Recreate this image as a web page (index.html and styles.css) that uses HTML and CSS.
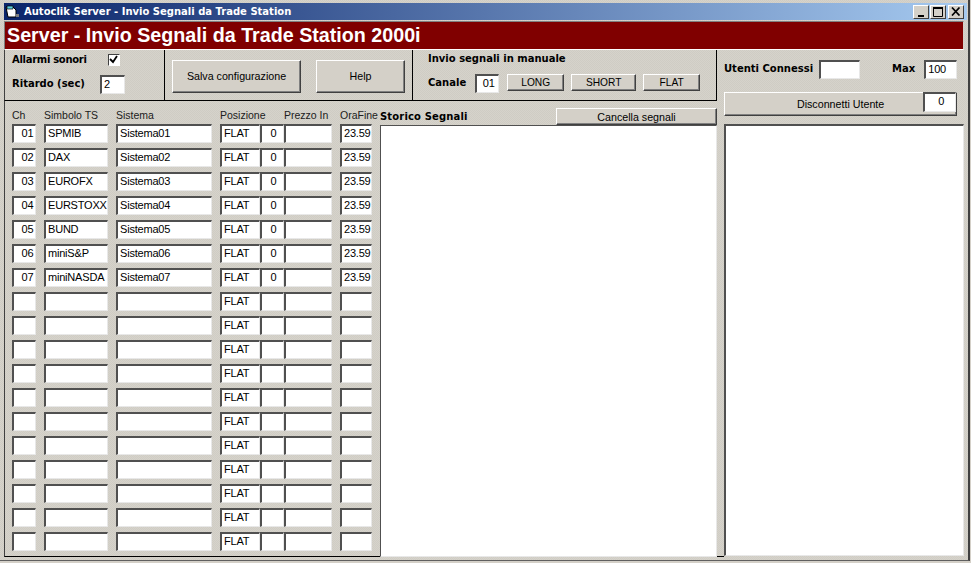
FILE: index.html
```html
<!DOCTYPE html>
<html lang="it">
<head>
<meta charset="UTF-8">
<title>Autoclik Server - Invio Segnali da Trade Station</title>
<link rel="stylesheet" href="styles.css">
</head>
<body>
<div class="window">

  <div class="titlebar">
    <svg class="app-icon" width="16" height="14" viewBox="0 0 16 14">
      <path d="M2 2h7l3 3v7H4z" fill="#fff" stroke="#000"/>
      <path d="M3 1h6v3H3z" fill="#5fd0e0" stroke="#000" stroke-width="0.7"/>
      <path d="M12 9h3v3h-3z" fill="#808080"/>
    </svg>
    <span class="title-text">Autoclik Server - Invio Segnali da Trade Station</span>
    <div class="caption-btns">
      <div class="caption-btn">
        <svg width="10" height="10" viewBox="0 0 10 10"><path d="M2 8h6v2H2z" fill="#000"/></svg>
      </div>
      <div class="caption-btn">
        <svg width="11" height="10" viewBox="0 0 11 10"><path d="M.5 1.5h9v8h-9z" fill="none" stroke="#000"/><path d="M0 0h10v2H0z" fill="#000"/></svg>
      </div>
      <div class="caption-btn close-btn">
        <svg width="10" height="9" viewBox="0 0 10 9"><path d="M1 .5l7.5 8M8.5 .5L1 8.5" stroke="#000" stroke-width="1.7" fill="none"/></svg>
      </div>
    </div>
  </div>

  <div class="banner">Server - Invio Segnali da Trade Station 2000i</div>

  <div class="main">
    <div class="left-side">
      <div class="toolbar">
        <div class="tool-box box-alarm">
          <div class="alarm-row">
            <span class="lbl-bold lbl-alarm">Allarmi sonori</span>
            <div class="check">
              <svg width="9" height="9" viewBox="0 0 9 9"><path d="M1 4l3 3 4-6" fill="none" stroke="#000" stroke-width="1.8"/></svg>
            </div>
          </div>
          <div class="delay-row">
            <span class="lbl-bold lbl-up">Ritardo (sec)</span>
            <div class="field f-delay">2</div>
          </div>
        </div>
        <div class="tool-box box-save">
          <div class="btn btn-save">Salva configurazione</div>
          <div class="btn btn-help">Help</div>
        </div>
        <div class="tool-box box-manual">
          <div class="lbl-bold">Invio segnali in manuale</div>
          <div class="manual-row">
            <span class="lbl-bold lbl-up">Canale</span>
            <div class="field f-channel">01</div>
            <div class="btn btn-signal">LONG</div>
            <div class="btn btn-signal btn-short">SHORT</div>
            <div class="btn btn-signal">FLAT</div>
          </div>
        </div>
      </div>

      <div class="content">
        <div class="table-panel">
          <div class="grid-row head-row">
            <span>Ch</span><span>Simbolo TS</span><span>Sistema</span><span class="head-pos">Posizione</span><span class="head-price">Prezzo In</span><span class="head-end">OraFine</span>
          </div>
          <div class="grid-row"><div class="field center">01</div><div class="field">SPMIB</div><div class="field">Sistema01</div><div class="pos-group"><div class="field f-pos">FLAT</div><div class="field f-qty">0</div><div class="field f-price"></div></div><div class="field">23.59</div></div>
          <div class="grid-row"><div class="field center">02</div><div class="field">DAX</div><div class="field">Sistema02</div><div class="pos-group"><div class="field f-pos">FLAT</div><div class="field f-qty">0</div><div class="field f-price"></div></div><div class="field">23.59</div></div>
          <div class="grid-row"><div class="field center">03</div><div class="field">EUROFX</div><div class="field">Sistema03</div><div class="pos-group"><div class="field f-pos">FLAT</div><div class="field f-qty">0</div><div class="field f-price"></div></div><div class="field">23.59</div></div>
          <div class="grid-row"><div class="field center">04</div><div class="field">EURSTOXX</div><div class="field">Sistema04</div><div class="pos-group"><div class="field f-pos">FLAT</div><div class="field f-qty">0</div><div class="field f-price"></div></div><div class="field">23.59</div></div>
          <div class="grid-row"><div class="field center">05</div><div class="field">BUND</div><div class="field">Sistema05</div><div class="pos-group"><div class="field f-pos">FLAT</div><div class="field f-qty">0</div><div class="field f-price"></div></div><div class="field">23.59</div></div>
          <div class="grid-row"><div class="field center">06</div><div class="field">miniS&amp;P</div><div class="field">Sistema06</div><div class="pos-group"><div class="field f-pos">FLAT</div><div class="field f-qty">0</div><div class="field f-price"></div></div><div class="field">23.59</div></div>
          <div class="grid-row"><div class="field center">07</div><div class="field">miniNASDA</div><div class="field">Sistema07</div><div class="pos-group"><div class="field f-pos">FLAT</div><div class="field f-qty">0</div><div class="field f-price"></div></div><div class="field">23.59</div></div>
          <div class="grid-row"><div class="field"></div><div class="field"></div><div class="field"></div><div class="pos-group"><div class="field f-pos">FLAT</div><div class="field f-qty"></div><div class="field f-price"></div></div><div class="field"></div></div>
          <div class="grid-row"><div class="field"></div><div class="field"></div><div class="field"></div><div class="pos-group"><div class="field f-pos">FLAT</div><div class="field f-qty"></div><div class="field f-price"></div></div><div class="field"></div></div>
          <div class="grid-row"><div class="field"></div><div class="field"></div><div class="field"></div><div class="pos-group"><div class="field f-pos">FLAT</div><div class="field f-qty"></div><div class="field f-price"></div></div><div class="field"></div></div>
          <div class="grid-row"><div class="field"></div><div class="field"></div><div class="field"></div><div class="pos-group"><div class="field f-pos">FLAT</div><div class="field f-qty"></div><div class="field f-price"></div></div><div class="field"></div></div>
          <div class="grid-row"><div class="field"></div><div class="field"></div><div class="field"></div><div class="pos-group"><div class="field f-pos">FLAT</div><div class="field f-qty"></div><div class="field f-price"></div></div><div class="field"></div></div>
          <div class="grid-row"><div class="field"></div><div class="field"></div><div class="field"></div><div class="pos-group"><div class="field f-pos">FLAT</div><div class="field f-qty"></div><div class="field f-price"></div></div><div class="field"></div></div>
          <div class="grid-row"><div class="field"></div><div class="field"></div><div class="field"></div><div class="pos-group"><div class="field f-pos">FLAT</div><div class="field f-qty"></div><div class="field f-price"></div></div><div class="field"></div></div>
          <div class="grid-row"><div class="field"></div><div class="field"></div><div class="field"></div><div class="pos-group"><div class="field f-pos">FLAT</div><div class="field f-qty"></div><div class="field f-price"></div></div><div class="field"></div></div>
          <div class="grid-row"><div class="field"></div><div class="field"></div><div class="field"></div><div class="pos-group"><div class="field f-pos">FLAT</div><div class="field f-qty"></div><div class="field f-price"></div></div><div class="field"></div></div>
          <div class="grid-row"><div class="field"></div><div class="field"></div><div class="field"></div><div class="pos-group"><div class="field f-pos">FLAT</div><div class="field f-qty"></div><div class="field f-price"></div></div><div class="field"></div></div>
          <div class="grid-row"><div class="field"></div><div class="field"></div><div class="field"></div><div class="pos-group"><div class="field f-pos">FLAT</div><div class="field f-qty"></div><div class="field f-price"></div></div><div class="field"></div></div>
        </div>
        <div class="history">
          <div class="history-head">
            <span class="lbl-bold lbl-history">Storico Segnali</span>
            <div class="btn btn-clear">Cancella segnali</div>
          </div>
          <div class="list"></div>
        </div>
      </div>
    </div>

    <div class="right-side">
      <div class="users-row">
        <span class="lbl-bold lbl-up">Utenti Connessi</span>
        <div class="field f-users"></div>
        <span class="lbl-bold lbl-up lbl-max">Max</span>
        <div class="field f-max">100</div>
      </div>
      <div class="btn btn-disc">
        <span class="disc-text">Disconnetti Utente</span>
        <div class="field f-disc">0</div>
      </div>
      <div class="list list-users"></div>
    </div>
  </div>

</div>
</body>
</html>
```

FILE: styles.css
```css
* { box-sizing: border-box; }
html, body { margin: 0; height: 100%; overflow: hidden; }
body { background: #d4d0c8; font-family: "Liberation Sans", Arial, sans-serif; font-size: 11px; color: #000; }

.window { width: 970px; height: 561px; padding: 3px 1px 3px 4px; display: flex; flex-direction: column;
          background: repeating-conic-gradient(#d6d3cb 0 25%, #cfccc4 0 50%) 0 0 / 2px 2px;
          border-right: 2px solid #404040; border-bottom: 1px solid #606060; }

.titlebar { height: 17px; flex: none; display: flex; align-items: center; padding: 0 3px 0 0;
            background: linear-gradient(to right, #0a246a, #a6caf0); color: #fff; }
.app-icon { flex: none; margin-right: 4px; }
.title-text { font-family: "DejaVu Sans", Verdana, sans-serif; font-weight: bold; font-size: 10px; }
.caption-btns { margin-left: auto; display: flex; gap: 1px; }
.caption-btn { width: 16px; height: 14px; background: #d4d0c8; display: flex; align-items: center; justify-content: center;
               border: 1px solid; border-color: #fff #404040 #404040 #fff; }
.close-btn { margin-left: 1px; }

.banner { height: 29px; flex: none; margin: 1px 3px 0 0; background: #800000; color: #fff; padding-left: 2px;
          font-weight: bold; font-size: 19.7px; line-height: 26px; white-space: nowrap;
          border: 1px solid; border-color: #808080 #d4d0c8 #fff #808080; }

.main { flex: 1; display: flex; min-height: 0; }
.left-side { width: 713px; flex: none; display: flex; flex-direction: column; }
.right-side { flex: 1; padding: 10px 3px 0 7px; display: flex; flex-direction: column; position: relative; }
.right-side::after { content: ""; position: absolute; left: 0; bottom: 0; width: 7px; height: 1px; background: #000; }

.lbl-bold { font-family: "DejaVu Sans", Verdana, sans-serif; font-weight: bold; font-size: 10px; white-space: nowrap; }
.lbl-alarm { letter-spacing: -0.3px; }
.lbl-history { letter-spacing: 0.15px; margin-left: 1px; }
.lbl-up { position: relative; top: -1px; }

.toolbar { height: 51px; flex: none; display: flex; border-bottom: 1px solid #000; border-left: 1px solid #404040; }
.tool-box { height: 100%; border-right: 1px solid #000; }
.box-alarm { width: 160px; padding: 3px 0 0 7px; }
.alarm-row { display: flex; align-items: center; height: 13px; }
.check { width: 12px; height: 12px; margin-left: 21px; background: #fff; display: flex; align-items: center; justify-content: center;
         border: 1px solid; border-color: #404040 #fff #fff #404040; }
.delay-row { display: flex; align-items: center; margin-top: 9px; height: 19px; }
.f-delay { width: 25px; margin-left: 15px; }
.box-save { width: 248px; display: flex; align-items: center; padding: 2px 7px 0; gap: 15px; }
.box-manual { flex: 1; padding: 3px 0 0 15px; }
.manual-row { display: flex; align-items: center; margin-top: 10px; height: 19px; }
.f-channel { width: 24px; margin-left: 9px; margin-right: 8px; text-align: center; }

.btn { background: #d4d0c8; color: #000; display: flex; align-items: center; justify-content: center; font-size: 10.7px;
       border: 1px solid; border-color: #fff #404040 #404040 #fff; box-shadow: inset -1px -1px 0 #808080; }
.btn-save { width: 129px; height: 33px; }
.btn-help { width: 89px; height: 33px; }
.btn-signal { height: 17px; width: 57px; margin-right: 7px; margin-top: -2px; font-size: 10.2px; }
.btn-short { width: 65px; }

.field { height: 19px; background: #fff; padding: 0 0 0 2px; line-height: 15px; font-size: 11px; letter-spacing: -0.2px; white-space: nowrap; overflow: hidden;
         border-style: solid; border-width: 2px 1px 1px 2px; border-color: #505050 #e8e8e8 #e8e8e8 #505050; }
.center { text-align: center; padding-left: 6px; }

.content { flex: 1; display: flex; min-height: 0; }
.table-panel { width: 376px; flex: none; padding: 0 0 0 7px; border-left: 1px solid #404040; border-bottom: 1px solid #000; }
.grid-row { display: grid; grid-template-columns: 24px 64px 96px 112px 32px; column-gap: 8px; height: 24px; align-items: start; }
.head-row { height: 23px; display: flex; column-gap: 0; padding-top: 8px; line-height: 13px; font-size: 10.5px; color: #202020; }
.head-row span:nth-child(1) { width: 32px; }
.head-row span:nth-child(2) { width: 72px; }
.head-row span:nth-child(3) { width: 104px; }
.head-pos { width: 64px; }
.head-price { width: 56px; }
.pos-group { display: flex; }
.f-pos { width: 40px; }
.f-qty { width: 24px; text-align: center; }
.f-price { width: 48px; }

.history { flex: 1; display: flex; flex-direction: column; min-width: 0; }
.history-head { height: 24px; flex: none; display: flex; align-items: flex-end; justify-content: space-between; padding-bottom: 3px; margin-left: -1px; }
.btn-clear { width: 161px; height: 17px; margin-bottom: -3px; }
.list { flex: 1; background: #fff; border-style: solid; border-width: 1px; border-color: #505050 #e8e8e8 #e8e8e8 #505050; }

.users-row { display: flex; align-items: center; height: 19px; flex: none; margin-right: 7px; }
.f-users { width: 41px; margin-left: 6px; }
.lbl-max { margin-left: 32px; margin-right: 3px; }
.f-max { width: 33px; margin-left: 6px; }
.btn-disc { height: 24px; flex: none; margin: 13px 7px 0 0; position: relative; }
.f-disc { position: absolute; right: 0; top: -1px; width: 33px; height: 20px; text-align: center; }
.list-users { margin-top: 8px; margin-bottom: 1px; border-width: 2px 1px 1px 2px; }
```
